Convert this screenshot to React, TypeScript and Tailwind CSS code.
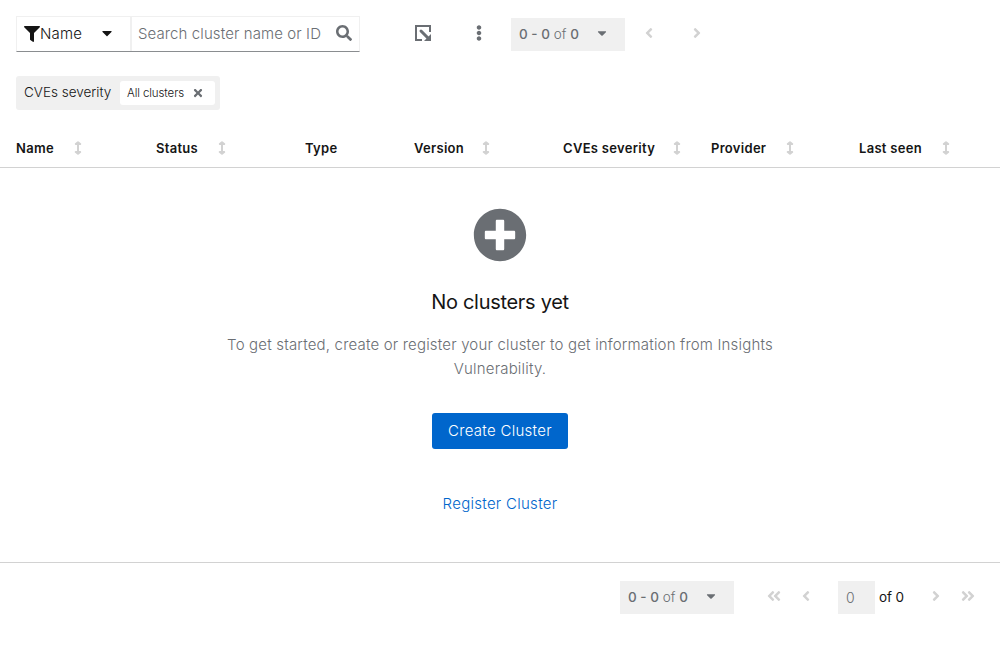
import React from "react";
import {
  FaAngleDoubleLeft,
  FaAngleDoubleRight,
  FaAngleLeft,
  FaAngleRight,
  FaCaretDown,
  FaEllipsisV,
  FaFilter,
  FaPlusCircle,
  FaSearch,
  FaTimes,
} from "react-icons/fa";

function ExportIcon() {
  return (
    <svg width="16" height="16" viewBox="0 0 16 16" fill="none" stroke="#6a6e73" strokeWidth="2">
      <path d="M15 7V1H1v14h6" />
      <path d="M6 6l7 7" strokeWidth="3" strokeLinecap="round" />
      <path d="M16 9v7H9z" fill="#6a6e73" stroke="none" />
    </svg>
  );
}

function SortIcon() {
  return (
    <svg width="8" height="14" viewBox="0 0 8 14" fill="none" stroke="#d2d2d2" strokeWidth="2" strokeLinecap="round" strokeLinejoin="round">
      <path d="M4 2v10" strokeLinecap="butt" />
      <path d="M4 1.2L6.2 3H1.8zM4 12.8L1.8 11h4.4z" fill="#d2d2d2" />
    </svg>
  );
}

function CountToggle() {
  return (
    <button className="flex h-[33px] w-[114px] shrink-0 items-center bg-[#f0f0f0] pl-[8px] text-[13.5px] text-[#6a6e73]">
      <span className="w-[61px] whitespace-nowrap text-left">
        <b className="font-medium">0 - 0</b> <span className="font-light">of</span> <b className="font-medium">0</b>
      </span>
      <FaCaretDown className="mb-[3px] ml-[15px] size-[14px]" />
    </button>
  );
}

const columns = [
  { label: "Name", width: "w-[140px]", arrow: "w-[58px]" },
  { label: "Status", width: "w-[149px]", arrow: "w-[62px]" },
  { label: "Type", width: "w-[109px]", arrow: "" },
  { label: "Version", width: "w-[149px]", arrow: "w-[68px]" },
  { label: "CVEs severity", width: "w-[148px]", arrow: "w-[110px]" },
  { label: "Provider", width: "w-[148px]", arrow: "w-[75px]" },
  { label: "Last seen", width: "w-[141px]", arrow: "w-[83px]" },
];

export default function App() {
  return (
    <main className="h-[660px] w-[1000px] overflow-hidden bg-white font-['Inter',sans-serif] text-[#151515]">
      <header className="flex h-[76px] items-start pl-4 pt-4">
        <div className="flex h-9 w-[344px] border border-[#f0f0f0] border-b-[#8a8d90]">
          <button className="flex w-[115px] items-center border-r-2 border-[#f0f0f0] pl-[7px]">
            <FaFilter className="size-4 shrink-0" />
            <span className="w-[43px] text-left text-[15px] font-light tracking-[0.2px]">Name</span>
            <FaCaretDown className="mb-[2px] ml-[16px] size-4" />
          </button>
          <div className="flex flex-1 items-center pl-[6px] text-[#6a6e73]">
            <span className="w-[198px] whitespace-nowrap text-[15px] font-light tracking-[0.1px]">Search cluster name or ID</span>
            <FaSearch className="mb-[2px] size-4 shrink-0" />
          </div>
        </div>
        <button className="ml-[55px] mt-[9px]"><ExportIcon /></button>
        <button className="ml-10 mt-[9px] text-[#6a6e73]"><FaEllipsisV className="size-4" /></button>
        <div className="ml-6 mt-[2px] flex items-center text-[#d2d2d2]">
          <CountToggle />
          <FaAngleLeft className="mb-[3px] ml-4 size-4" />
          <FaAngleRight className="mb-[3px] ml-8 size-4" />
        </div>
      </header>

      <div className="ml-4 flex h-[34px] w-[204px] items-center rounded-[3px] bg-[#f0f0f0] pl-2">
        <span className="mb-[2px] w-24 whitespace-nowrap text-[13.5px] font-light">CVEs severity</span>
        <span className="flex h-6 w-[95px] items-center rounded-[3px] bg-white pl-[7px] text-[11.5px]">
          <span className="w-[65px] whitespace-nowrap pt-px font-light tracking-[-0.1px]">All clusters</span>
          <FaTimes className="size-3 text-[#6a6e73]" />
        </span>
      </div>

      <div className="flex h-[58px] items-center border-b border-[#d2d2d2] pl-4 pt-[19px] text-[13px] font-semibold">
        {columns.map((c) => (
          <div key={c.label} className={`flex shrink-0 items-center ${c.width}`}>
            <span className={`whitespace-nowrap pt-px tracking-[0.3px] ${c.arrow}`}>{c.label}</span>
            {c.arrow && <SortIcon />}
          </div>
        ))}
      </div>

      <section className="flex h-[395px] flex-col items-center border-b border-[#d2d2d2] pt-10">
        <FaPlusCircle className="size-[54px] shrink-0 text-[#6a6e73]" />
        <h1 className="mt-[25px] text-[20px] font-normal leading-[30px] tracking-[-0.3px]">No clusters yet</h1>
        <p className="mt-4 w-[570px] text-center text-[15px] font-light leading-6 tracking-[0.18px] text-[#6a6e73]">
          To get started, create or register your cluster to get information from Insights Vulnerability.
        </p>
        <button className="mt-8 h-9 w-[136px] rounded-[3px] bg-[#0066cc] text-[15px] font-light tracking-[0.28px] text-white">Create Cluster</button>
        <button className="mt-[37px] h-9 text-[15px] font-light tracking-[0.28px] text-[#0066cc]">Register Cluster</button>
      </section>

      <footer className="flex h-[68px] items-center pl-[620px] text-[#d2d2d2]">
        <CountToggle />
        <FaAngleDoubleLeft className="mb-[2px] ml-8 size-4" />
        <FaAngleLeft className="mb-[2px] ml-4 size-4" />
        <div className="ml-6 flex h-[33px] w-[37px] items-center bg-[#f0f0f0] pl-2 text-[14px] font-light text-[#6a6e73]">0</div>
        <span className="ml-1 w-[49px] whitespace-nowrap text-[13.5px] tracking-[-0.1px] text-[#151515]">of 0</span>
        <FaAngleRight className="mb-[2px] size-4" />
        <FaAngleDoubleRight className="mb-[2px] ml-4 size-4" />
      </footer>
    </main>
  );
}
